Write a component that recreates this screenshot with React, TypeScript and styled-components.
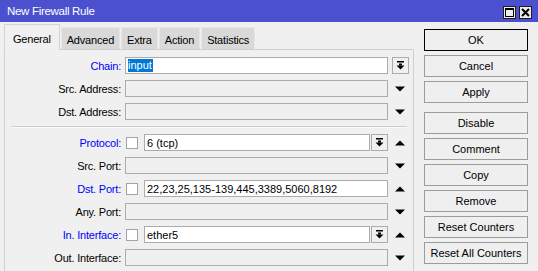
import React from 'react';
import styled, {createGlobalStyle} from 'styled-components';

const Global = createGlobalStyle`
  html, body {
    margin: 0;
    padding: 0;
    background: #f0f0f0;
    overflow: hidden;
  }
  body {
    font-family: "Liberation Sans", Arial, sans-serif;
    font-size: 11px;
    color: #000;
  }
`

type FieldRow = {
    label: string
    accent?: boolean
    check?: boolean
    value?: string
    selected?: boolean
    drop?: 'inside' | 'tail'
    tail?: 'down' | 'up'
}

const topRows: FieldRow[] = [
    {label: 'Chain:', accent: true, value: 'input', selected: true, drop: 'tail'},
    {label: 'Src. Address:', tail: 'down'},
    {label: 'Dst. Address:', tail: 'down'},
]

const bottomRows: FieldRow[] = [
    {label: 'Protocol:', accent: true, check: true, value: '6 (tcp)', drop: 'inside', tail: 'up'},
    {label: 'Src. Port:', tail: 'down'},
    {label: 'Dst. Port:', accent: true, check: true, value: '22,23,25,135-139,445,3389,5060,8192', tail: 'up'},
    {label: 'Any. Port:', tail: 'down'},
    {label: 'In. Interface:', accent: true, check: true, value: 'ether5', drop: 'inside', tail: 'up'},
    {label: 'Out. Interface:', tail: 'down'},
]

const tabs = ['General', 'Advanced', 'Extra', 'Action', 'Statistics']

const DropIcon = () => (
    <svg width="9" height="9" viewBox="0 0 9 9">
        <rect x="1" y="0" width="7" height="1.5" fill="#000"/>
        <rect x="3" y="2.5" width="3" height="2" fill="#000"/>
        <polygon points="0.5,4.5 8.5,4.5 4.5,8.5" fill="#000"/>
    </svg>
)

const ArrowIcon = ({dir}: { dir: 'down' | 'up' }) => (
    <svg width="10" height="6" viewBox="0 0 10 6">
        {dir === 'down'
            ? <polygon points="0,0.5 10,0.5 5,5.5" fill="#000"/>
            : <polygon points="0,5.5 10,5.5 5,0.5" fill="#000"/>}
    </svg>
)

const Row = ({row}: { row: FieldRow }) => {
    const editable = row.value !== undefined
    return (
        <RowGrid>
            <Label $accent={!!row.accent}>{row.label}</Label>
            <Field>
                {row.check && <Check/>}
                <Input $editable={editable}>
                    {row.selected ? <Selected>{row.value}</Selected> : row.value}
                </Input>
                {row.drop === 'inside' && <DropBtn><DropIcon/></DropBtn>}
            </Field>
            <Tail>
                {row.drop === 'tail' && <DropBtn><DropIcon/></DropBtn>}
                {row.tail && <ArrowIcon dir={row.tail}/>}
            </Tail>
        </RowGrid>
    )
}

export default function App() {
    return (
        <Window>
            <Global/>
            <TitleBar>
                <TitleText>New Firewall Rule</TitleText>
                <TitleButtons>
                    <TitleBtn>
                        <svg width="9" height="9" viewBox="0 0 9 9">
                            <rect x="0.5" y="0.5" width="8" height="8" fill="none" stroke="#000"/>
                            <rect x="0" y="0" width="9" height="2" fill="#000"/>
                        </svg>
                    </TitleBtn>
                    <TitleBtn>
                        <svg width="9" height="9" viewBox="0 0 9 9">
                            <path d="M1 1 L8 8 M8 1 L1 8" stroke="#000" strokeWidth="2"/>
                        </svg>
                    </TitleBtn>
                </TitleButtons>
            </TitleBar>
            <Body>
                <Main>
                    <TabStrip>
                        {tabs.map((t, i) => (
                            <Tab key={t} $active={i === 0}>{t}</Tab>
                        ))}
                    </TabStrip>
                    <Panel>
                        {topRows.map(r => <Row key={r.label} row={r}/>)}
                        <Separator/>
                        {bottomRows.map(r => <Row key={r.label} row={r}/>)}
                    </Panel>
                </Main>
                <Side>
                    <Button $primary>OK</Button>
                    <Button>Cancel</Button>
                    <Button>Apply</Button>
                    <Gap/>
                    <Button>Disable</Button>
                    <Button>Comment</Button>
                    <Button>Copy</Button>
                    <Button>Remove</Button>
                    <Button>Reset Counters</Button>
                    <Button>Reset All Counters</Button>
                </Side>
            </Body>
        </Window>
    )
}

const Window = styled.div`
  width: 538px;
  height: 271px;
  display: flex;
  flex-direction: column;
  overflow: hidden;
  background: #f0f0f0;
`

const TitleBar = styled.div`
  height: 22px;
  flex: none;
  background: #4b50cf;
  display: flex;
  align-items: center;
  justify-content: space-between;
  padding: 0 6px 0 7px;
`

const TitleText = styled.span`
  color: #fff;
  font-size: 11.5px;
  letter-spacing: -0.3px;
`

const TitleButtons = styled.div`
  display: flex;
  gap: 3px;
  margin-top: 2px;
`

const TitleBtn = styled.div`
  width: 13px;
  height: 13px;
  box-sizing: border-box;
  border: 1px solid #1e1e1e;
  background: #ececec;
  display: flex;
  align-items: center;
  justify-content: center;
`

const Body = styled.div`
  flex: 1;
  display: flex;
  min-height: 0;
`

const Main = styled.div`
  width: 410px;
  margin-left: 4px;
  padding-top: 3px;
  display: flex;
  flex-direction: column;
`

const TabStrip = styled.div`
  display: flex;
  align-items: flex-end;
  height: 25px;
  position: relative;
  z-index: 1;
  margin-bottom: -1px;
`

const Tab = styled.div<{ $active: boolean }>`
  box-sizing: border-box;
  height: ${p => p.$active ? '26px' : '22px'};
  padding: ${p => p.$active ? '3px 8px 0 8px' : '2px 5px 0 5px'};
  margin-bottom: ${p => p.$active ? '0' : '1px'};
  background: ${p => p.$active ? '#f0f0f0' : '#d9d9d9'};
  border: 1px solid ${p => p.$active ? '#d4d4d4' : '#e6e6e6'};
  border-bottom: none;
  display: flex;
  align-items: center;
  margin-right: 1px;
  letter-spacing: -0.2px;
`

const Panel = styled.div`
  flex: 1;
  box-sizing: border-box;
  border: 1px solid #cfcfcf;
  border-bottom: none;
  padding: 7px 6px 0 0;
  display: flex;
  flex-direction: column;
  gap: 6px;
`

const RowGrid = styled.div`
  display: grid;
  grid-template-columns: 116px 264px 18px;
  column-gap: 4px;
  height: 17px;
  align-items: center;
`

const Label = styled.span<{ $accent: boolean }>`
  text-align: right;
  color: ${p => p.$accent ? '#0000ff' : '#000'};
  white-space: nowrap;
  letter-spacing: -0.2px;
`

const Field = styled.div`
  display: flex;
  align-items: center;
  height: 17px;
  padding-right: 1px;
`

const Check = styled.div`
  width: 12px;
  height: 12px;
  box-sizing: border-box;
  border: 1px solid #a3a3a3;
  background: #fff;
  margin: 0 6px 0 1px;
  flex: none;
`

const Input = styled.div<{ $editable: boolean }>`
  flex: 1;
  height: 17px;
  box-sizing: border-box;
  border: 1px solid #acacac;
  background: ${p => p.$editable ? '#fff' : '#f0f0f0'};
  padding: 0 2px;
  display: flex;
  align-items: center;
  white-space: nowrap;
  overflow: hidden;
`

const Selected = styled.span`
  background: #0078d7;
  color: #fff;
  padding: 0 1px 1px 0;
`

const DropBtn = styled.div`
  width: 17px;
  height: 17px;
  box-sizing: border-box;
  border: 1px solid #acacac;
  background: #f0f0f0;
  display: flex;
  align-items: center;
  justify-content: center;
  margin-left: 1px;
  flex: none;
`

const Tail = styled.div`
  display: flex;
  align-items: center;
  justify-content: center;
  height: 17px;
  margin-left: -4px;
`

const Separator = styled.div`
  height: 1px;
  margin-left: 6px;
  width: 396px;
  background: #cdcdcd;
  border-bottom: 1px solid #fafafa;
`

const Side = styled.div`
  width: 104px;
  margin-left: 10px;
  padding-top: 7px;
  display: flex;
  flex-direction: column;
  gap: 4px;
`

const Gap = styled.div`
  height: 1px;
`

const Button = styled.div<{ $primary?: boolean }>`
  height: 22px;
  box-sizing: border-box;
  border: 1px solid ${p => p.$primary ? '#000' : '#9c9c9c'};
  background: #efefef;
  display: flex;
  align-items: center;
  justify-content: center;
  white-space: nowrap;
  flex: none;
`
